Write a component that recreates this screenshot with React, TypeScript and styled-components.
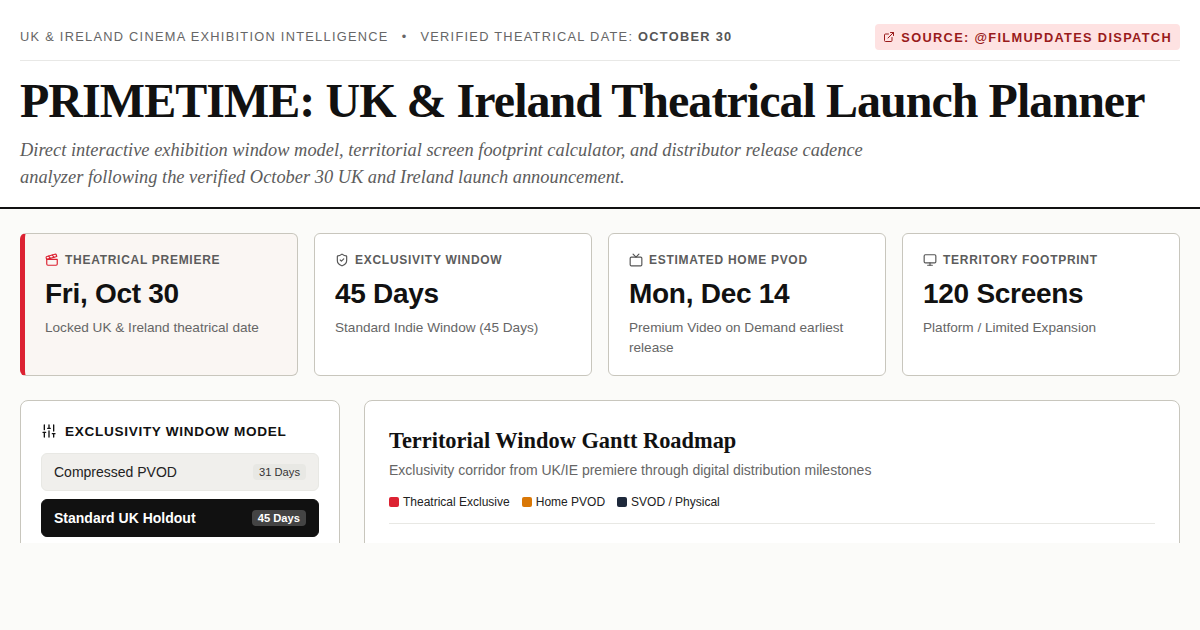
import React from 'react';
import styled, { createGlobalStyle } from 'styled-components';
import {
  Clapperboard,
  ExternalLink,
  Monitor,
  ShieldCheck,
  SlidersVertical,
  Tv,
} from 'lucide-react';

const SANS = 'Arial, "Liberation Sans", sans-serif';
const SERIF = '"Times New Roman", "Liberation Serif", serif';

const GlobalStyle = createGlobalStyle`
  html, body {
    margin: 0;
    padding: 0;
    width: 1200px;
    height: 630px;
    overflow: hidden;
    background: #fbfbf9;
  }
  * {
    box-sizing: border-box;
  }
`;

const stats = [
  {
    icon: <Clapperboard size={14} color='#dc2232' />,
    label: 'THEATRICAL PREMIERE',
    value: 'Fri, Oct 30',
    note: 'Locked UK & Ireland theatrical date',
    accent: true,
  },
  {
    icon: <ShieldCheck size={14} color='#555' />,
    label: 'EXCLUSIVITY WINDOW',
    value: '45 Days',
    note: 'Standard Indie Window (45 Days)',
  },
  {
    icon: <Tv size={14} color='#555' />,
    label: 'ESTIMATED HOME PVOD',
    value: 'Mon, Dec 14',
    note: 'Premium Video on Demand earliest release',
  },
  {
    icon: <Monitor size={14} color='#555' />,
    label: 'TERRITORY FOOTPRINT',
    value: '120 Screens',
    note: 'Platform / Limited Expansion',
  },
];

const legend = [
  { color: '#dc2232', label: 'Theatrical Exclusive' },
  { color: '#d97706', label: 'Home PVOD' },
  { color: '#1e293b', label: 'SVOD / Physical' },
];

export default function App(): JSX.Element {
  return (
    <Page>
      <GlobalStyle />
      <Header>
        <TopBar>
          <Kicker>
            UK &amp; IRELAND CINEMA EXHIBITION INTELLIGENCE
            <Bullet>•</Bullet>
            VERIFIED THEATRICAL DATE: <strong>OCTOBER 30</strong>
          </Kicker>
          <SourcePill>
            <ExternalLink size={12} />
            SOURCE: @FILMUPDATES DISPATCH
          </SourcePill>
        </TopBar>
        <Title>PRIMETIME: UK &amp; Ireland Theatrical Launch Planner</Title>
        <Subtitle>
          Direct interactive exhibition window model, territorial screen
          footprint calculator, and distributor release cadence analyzer
          following the verified October 30 UK and Ireland launch announcement.
        </Subtitle>
      </Header>
      <Content>
        <StatsGrid>
          {stats.map((stat) => (
            <StatCard key={stat.label} $accent={stat.accent}>
              <StatLabel>
                {stat.icon}
                {stat.label}
              </StatLabel>
              <StatValue>{stat.value}</StatValue>
              <StatNote>{stat.note}</StatNote>
            </StatCard>
          ))}
        </StatsGrid>
        <Columns>
          <ModelPanel>
            <PanelHeading>
              <SlidersVertical size={16} color='#111' />
              EXCLUSIVITY WINDOW MODEL
            </PanelHeading>
            <OptionList>
              <OptionRow>
                Compressed PVOD
                <DaysBadge>31 Days</DaysBadge>
              </OptionRow>
              <OptionRow $active>
                Standard UK Holdout
                <DaysBadge $active>45 Days</DaysBadge>
              </OptionRow>
            </OptionList>
          </ModelPanel>
          <RoadmapPanel>
            <RoadmapTitle>Territorial Window Gantt Roadmap</RoadmapTitle>
            <RoadmapNote>
              Exclusivity corridor from UK/IE premiere through digital
              distribution milestones
            </RoadmapNote>
            <Legend>
              {legend.map((item) => (
                <LegendItem key={item.label}>
                  <Swatch $color={item.color} />
                  {item.label}
                </LegendItem>
              ))}
            </Legend>
          </RoadmapPanel>
        </Columns>
      </Content>
    </Page>
  );
}

const Page = styled.div`
  width: 1200px;
  height: 543px;
  overflow: hidden;
  font-family: ${SANS};
  color: #111;
`;

const Header = styled.header`
  height: 209px;
  padding: 24px 20px 0;
  background: #fff;
  border-bottom: 2px solid #111;
`;

const TopBar = styled.div`
  display: flex;
  justify-content: space-between;
  align-items: flex-start;
  height: 37px;
  border-bottom: 1px solid #e8e8e6;
`;

const Kicker = styled.div`
  font-size: 12.8px;
  line-height: 26px;
  letter-spacing: 1.28px;
  color: #666;
  white-space: pre-wrap;

  strong {
    font-weight: 700;
    color: #555;
  }
`;

const Bullet = styled.span`
  margin: 0 13px;
`;

const SourcePill = styled.div`
  display: flex;
  align-items: center;
  gap: 6px;
  height: 26px;
  padding: 0 8px;
  border-radius: 4px;
  background: #fee2e2;
  color: #991b1b;
  font-size: 12.8px;
  font-weight: 700;
  letter-spacing: 1.33px;
`;

const Title = styled.h1`
  margin: 11px 0 0;
  font-family: ${SERIF};
  font-size: 48px;
  font-weight: 700;
  line-height: 58px;
  letter-spacing: -0.96px;
  color: #111;
  white-space: nowrap;
`;

const Subtitle = styled.p`
  margin: 7px 0 0;
  width: 900px;
  font-family: ${SERIF};
  font-size: 18.4px;
  font-style: italic;
  line-height: 27px;
  color: #5c5c5c;
`;

const Content = styled.main`
  padding: 24px 20px 0;
`;

const StatsGrid = styled.div`
  display: grid;
  grid-template-columns: repeat(4, 1fr);
  gap: 16px;
`;

const StatCard = styled.div<{ $accent?: boolean }>`
  height: 143px;
  padding: 18px 20px;
  border: 1px solid #c8c6bd;
  border-left: ${(props) =>
    props.$accent ? '5px solid #dc2232' : '1px solid #c8c6bd'};
  border-radius: 6px;
  background: ${(props) => (props.$accent ? '#faf6f3' : '#fff')};
`;

const StatLabel = styled.div`
  display: flex;
  align-items: center;
  gap: 6px;
  height: 16px;
  font-size: 12px;
  font-weight: 700;
  letter-spacing: 0.72px;
  color: #5c5c5c;
`;

const StatValue = styled.div`
  margin-top: 9px;
  font-size: 28px;
  font-weight: 700;
  line-height: 34px;
  letter-spacing: -0.28px;
  color: #111;
`;

const StatNote = styled.div`
  margin-top: 7px;
  font-size: 13.6px;
  line-height: 20px;
  color: #666;
`;

const Columns = styled.div`
  display: grid;
  grid-template-columns: 320px 816px;
  gap: 24px;
  margin-top: 24px;
`;

const ModelPanel = styled.section`
  height: 300px;
  padding: 20px;
  border: 1px solid #c8c6bd;
  border-radius: 8px;
  background: #fff;
`;

const PanelHeading = styled.h3`
  display: flex;
  align-items: center;
  gap: 8px;
  height: 20px;
  margin: 0;
  font-size: 13.6px;
  font-weight: 700;
  letter-spacing: 0.68px;
  color: #111;
`;

const OptionList = styled.div`
  display: flex;
  flex-direction: column;
  gap: 8px;
  margin-top: 12px;
`;

const OptionRow = styled.div<{ $active?: boolean }>`
  display: flex;
  justify-content: space-between;
  align-items: center;
  height: 38px;
  padding: 0 12px;
  border: 1px solid ${(props) => (props.$active ? '#111' : '#e8e8e4')};
  border-radius: 6px;
  background: ${(props) => (props.$active ? '#111' : '#f0efec')};
  color: ${(props) => (props.$active ? '#fff' : '#222')};
  font-size: 14px;
  font-weight: ${(props) => (props.$active ? 700 : 400)};
`;

const DaysBadge = styled.span<{ $active?: boolean }>`
  padding: 0 6px;
  border-radius: 4px;
  background: ${(props) => (props.$active ? '#444' : '#e8e8e4')};
  color: ${(props) => (props.$active ? '#fff' : '#333')};
  font-size: 11.2px;
  line-height: 16px;
`;

const RoadmapPanel = styled.section`
  height: 300px;
  padding: 24px;
  border: 1px solid #c8c6bd;
  border-radius: 8px;
  background: #fff;
`;

const RoadmapTitle = styled.h2`
  margin: 1px 0 0;
  font-family: ${SERIF};
  font-size: 22.4px;
  font-weight: 700;
  line-height: 30px;
  color: #111;
`;

const RoadmapNote = styled.p`
  margin: 4px 0 0;
  font-size: 14px;
  line-height: 20px;
  color: #666;
`;

const Legend = styled.div`
  display: flex;
  gap: 12px;
  margin-top: 14px;
  padding-bottom: 13px;
  border-bottom: 1px solid #e8e8e4;
`;

const LegendItem = styled.div`
  display: flex;
  align-items: center;
  gap: 4px;
  font-size: 12px;
  line-height: 16px;
  color: #222;
`;

const Swatch = styled.span<{ $color: string }>`
  width: 10px;
  height: 10px;
  border-radius: 2px;
  background: ${(props) => props.$color};
`;
